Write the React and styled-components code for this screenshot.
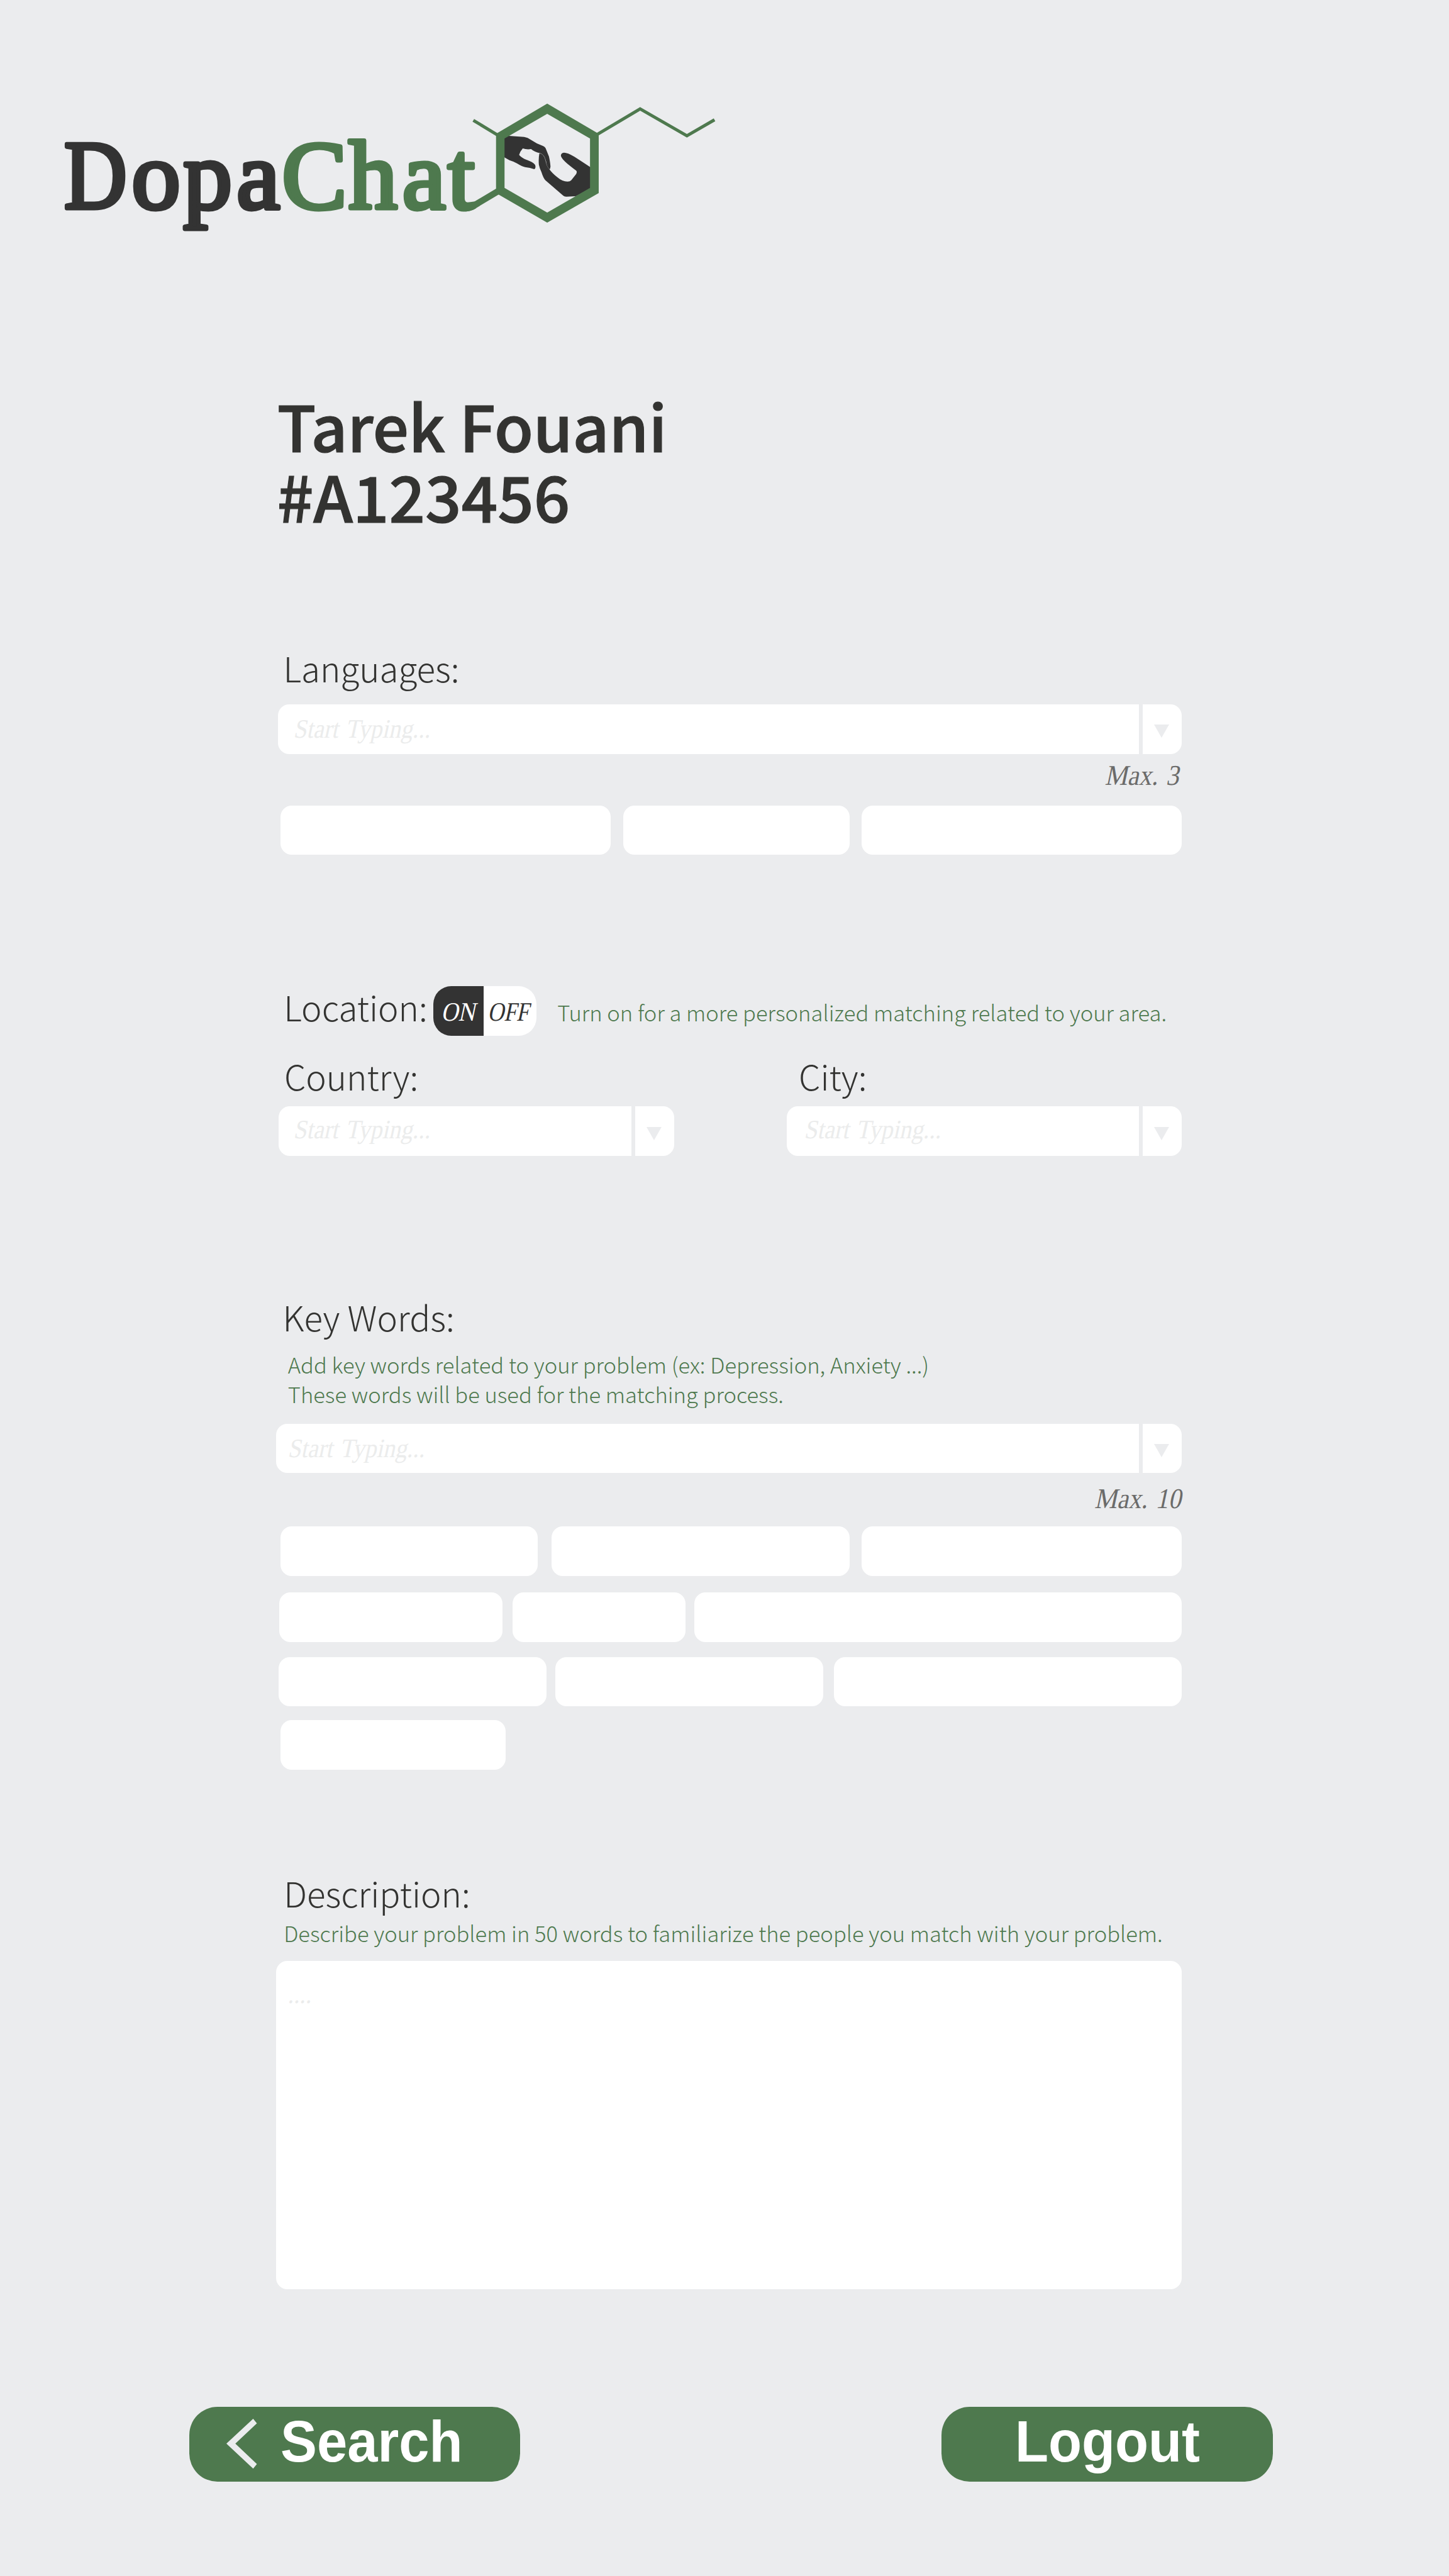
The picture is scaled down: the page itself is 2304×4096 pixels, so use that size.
import React from "react";
import styled, { createGlobalStyle } from "styled-components";

// All lengths are written in artboard units; the page is drawn at this ratio.
const RATIO = 2304 / 2985;
const u = (n) => `${(n * RATIO).toFixed(3)}px`;

const color = {
  page: "#ebecee",
  ink: "#333331",
  dark: "#333333",
  green: "#4e794e",
  note: "#6b6b6a",
  faint: "#ebecec",
  white: "#ffffff",
};

const sans = `"Noto Sans CJK SC", "Noto Sans", sans-serif`;
const serif = `"Liberation Serif", serif`;

const GlobalStyle = createGlobalStyle`
  *, *::before, *::after { box-sizing: border-box; }
  html, body { margin: 0; padding: 0; background: ${color.page}; }
`;

const Page = styled.div`
  display: flex;
  flex-direction: column;
  width: ${u(2985)};
  height: ${u(5306)};
  overflow: hidden;
  background: ${color.page};
  font-family: ${sans};
  color: ${color.ink};
`;

const Header = styled.header`
  display: flex;
  padding: ${u(200)} 0 0 ${u(120)};
`;

const LogoSvg = styled.svg`
  display: block;
  width: ${u(1370)};
  height: ${u(290)};
`;

const LogoText = styled.text`
  font-family: ${serif};
  font-size: 201px;
  fill: ${(p) => p.$color};
  stroke: ${(p) => p.$color};
  stroke-width: 9px;
  stroke-linejoin: round;
`;

const Main = styled.main`
  display: flex;
  flex-direction: column;
  width: ${u(1866)};
  margin-left: ${u(569)};
`;

const Name = styled.h1`
  margin: ${u(311.7)} 0 0;
  padding-left: ${u(2)};
  font-size: ${u(130.8)};
  line-height: ${u(146)};
  font-weight: 500;
  -webkit-text-stroke: ${u(1.6)} ${color.ink};
`;

const Section = styled.section`
  display: flex;
  flex-direction: column;
  margin-top: ${(p) => u(p.$top)};
`;

const Label = styled.label`
  display: block;
  margin-top: ${(p) => u(p.$top || 0)};
  padding-left: ${(p) => u(p.$indent)};
  font-size: ${u(71)};
  line-height: ${u(80)};
  font-weight: 300;
  white-space: nowrap;
`;

const Hint = styled.p`
  margin: ${(p) => u(p.$top || 0)} 0 0;
  padding-left: ${(p) => u(p.$indent || 0)};
  font-size: ${u(44.8)};
  line-height: ${u(60.3)};
  font-weight: 300;
  color: ${color.green};
  white-space: nowrap;
`;

const Slanted = styled.span`
  display: block;
  font-family: ${serif};
  font-size: ${(p) => u(p.$size || 55)};
  line-height: ${u(60)};
  word-spacing: ${u(4)};
  color: ${(p) => p.$color || color.faint};
  white-space: nowrap;
  transform: skewX(-12deg) scaleX(${(p) => p.$stretch || 0.89});
  transform-origin: ${(p) => (p.$end ? "100%" : "0")} 82%;
`;

const Field = styled.div`
  display: flex;
  gap: ${u(8.3)};
  width: ${(p) => u(p.$width)};
  height: ${u(101.9)};
  margin: ${(p) => u(p.$top)} 0 0 ${(p) => u(p.$left || 0)};
`;

const FieldText = styled.div`
  flex: 1;
  padding: ${(p) => u(p.$padTop)} 0 0 ${(p) => u(p.$padLeft)};
  border-radius: ${u(23)} 0 0 ${u(23)};
  background: ${color.white};
`;

const FieldArrow = styled.div`
  display: flex;
  justify-content: center;
  width: ${u(80.4)};
  padding: ${u(42)} ${u(3)} 0 0;
  border-radius: 0 ${u(23)} ${u(23)} 0;
  background: ${color.white};
`;

const ArrowSvg = styled.svg`
  display: block;
  width: ${u(31)};
  height: ${u(27.3)};
`;

const Limit = styled.div`
  display: flex;
  justify-content: flex-end;
  margin-top: ${(p) => u(p.$top)};
  padding-right: ${(p) => u(p.$right)};
`;

const ChipRow = styled.div`
  display: flex;
  margin-top: ${(p) => u(p.$top)};
`;

const Chip = styled.div`
  width: ${(p) => u(p.$width)};
  height: ${u(101.9)};
  margin-left: ${(p) => u(p.$gap)};
  border-radius: ${u(23)};
  background: ${color.white};
`;

const LocationRow = styled.div`
  display: flex;
  height: ${u(102.7)};
`;

const Toggle = styled.div`
  display: flex;
  width: ${u(212.6)};
  height: ${u(102.7)};
  margin-left: ${u(14)};
  border-radius: ${u(37)};
  overflow: hidden;
`;

const ToggleHalf = styled.div`
  flex: 1;
  padding: ${u(23.7)} 0 0 ${(p) => u(p.$pad)};
  background: ${(p) => (p.$active ? color.dark : color.white)};
`;

const LocationLabel = styled(Label)`
  width: ${u(309.5)};
`;

const Columns = styled.div`
  display: flex;
  margin-top: ${u(42.4)};
`;

const Column = styled.div`
  display: flex;
  flex-direction: column;
  width: ${(p) => u(p.$width)};
`;

const TextArea = styled.div`
  height: ${u(676)};
  margin-top: ${u(27.9)};
  padding: ${u(38)} 0 0 ${u(22.5)};
  border-radius: ${u(23)};
  background: ${color.white};
`;

const Footer = styled.footer`
  display: flex;
  justify-content: space-between;
  margin-top: ${u(241.6)};
  padding: 0 ${u(363.3)} 0 ${u(389.5)};
`;

const Button = styled.button`
  display: flex;
  align-items: flex-start;
  width: ${u(681.8)};
  height: ${u(154.4)};
  padding: 0 0 0 ${(p) => u(p.$pad)};
  border: 0;
  border-radius: ${u(58)};
  background: ${color.green};
  color: ${color.white};
`;

const ButtonText = styled.span`
  display: block;
  font-family: "Liberation Sans", Arial, sans-serif;
  font-weight: 700;
  font-size: ${u(119)};
  line-height: ${u(144)};
  transform: scaleX(0.945);
  transform-origin: 0 50%;
`;

const ChevronSvg = styled.svg`
  display: block;
  flex: none;
  width: ${u(62.8)};
  height: ${u(102.7)};
  margin: ${u(25.7)} ${u(48.6)} 0 0;
`;

function Logo() {
  return (
    <LogoSvg viewBox="120 200 1370 290" role="img" aria-label="DopaChat">
      <LogoText $color={color.dark} transform="translate(131.5 429.5) scale(0.89 1)">D</LogoText>
      <LogoText $color={color.dark} x="270.5 377.2 487" y="429.5">opa</LogoText>
      <LogoText $color={color.green} x="580.2 717.7 828.5 922" y="429.5">Chat</LogoText>
      <g fill="none" stroke={color.green}>
        <path d="M974.6 248.3 L1026 279.5" strokeWidth="6.5" />
        <path d="M1229 278 L1318.2 224.7 L1414.6 280.3 L1471.5 247.3" strokeWidth="6.5" />
      </g>
      <path
        fill={color.green}
        d="M953 411 C956 418 960 420.3 966 420.3 Q969 420.3 972 418.5 L1022 389 L1027 401 L978 430.5 Q968 436 958 436 Q950 436 944 431 Z"
      />
      <g transform="translate(940 180) scale(0.357143 0.333333)">
        <path
          fill={color.dark}
          d="M270 310 L301 301 L390 308 Q410 310 430 326 Q465 352 500 364 Q510 368 514 378 L533 428 Q540 460 542 490 Q541 505 536 508 Q525 500 519 475 Q513 420 482 408 Q450 402 430 383 Q405 387 382 379 Q366 398 361 419 Q372 436 405 450 Q440 463 453 480 Q460 500 448 507 Q425 498 395 494 Q380 492 350 472 Q330 460 305 452 L270 430 Z"
        />
        <path
          fill={color.dark}
          d="M478 409 Q472 440 475 480 Q480 505 490 525 Q500 560 513 576 L615 670 Q622 678 635 677 L688 674 L780 625 L780 500 L680 430 Q640 405 620 405 Q602 408 602 424 Q608 445 640 474 Q670 500 690 516 Q697 523 690 537 L662 575 Q655 584 640 584 Q610 584 580 556 Q550 530 536 508 Q520 490 514 455 Q505 412 478 409 Z"
        />
        <path
          fill="none"
          stroke="#8c8c8c"
          strokeWidth="1.6"
          d="M480 408 Q505 412 514 455 Q520 490 536 508"
        />
      </g>
      <path
        fill={color.green}
        fillRule="evenodd"
        d="M1126.8 214 L1232.9 276 L1232.9 398.3 L1126.8 459 L1021.4 398.3 L1021.4 276 Z M1126.8 235 L1038.9 285.7 L1038.9 387.7 L1126.8 438.3 L1215 387.7 L1215 285.7 Z"
      />
    </LogoSvg>
  );
}

function Select({ top, left, width, padTop = 21.6, padLeft }) {
  return (
    <Field $top={top} $left={left} $width={width}>
      <FieldText $padTop={padTop} $padLeft={padLeft}>
        <Slanted>Start Typing...</Slanted>
      </FieldText>
      <FieldArrow>
        <ArrowSvg viewBox="0 0 31 27.3">
          <path d="M0 0 H31 L15.5 27.3 Z" fill={color.page} />
        </ArrowSvg>
      </FieldArrow>
    </Field>
  );
}

// Each chip is [gap before it, width].
function Chips({ top, items }) {
  return (
    <ChipRow $top={top}>
      {items.map(([gap, width], i) => (
        <Chip key={i} $gap={gap} $width={width} />
      ))}
    </ChipRow>
  );
}

export default function App() {
  return (
    <Page>
      <GlobalStyle />
      <Header>
        <Logo />
      </Header>
      <Main>
        <Name>
          Tarek Fouani
          <br />
          #A123456
        </Name>

        <Section $top={242.4}>
          <Label $indent={14.5}>Languages:</Label>
          <Select top={34.9} left={4} width={1862} padTop={21} padLeft={31} />
          <Limit $top={14.7} $right={7.5}>
            <Slanted $size={59} $color={color.note} $stretch={0.89} $end>Max. 3</Slanted>
          </Limit>
          <Chips top={31.8} items={[[9.3, 679.7], [26.3, 465.7], [24.7, 660.3]]} />
        </Section>

        <Section $top={270.3}>
          <LocationRow>
            <LocationLabel $top={2.4} $indent={15.5}>Location:</LocationLabel>
            <Toggle>
              <ToggleHalf $active $pad={16}>
                <Slanted $color={color.white} $stretch={0.88}>ON</Slanted>
              </ToggleHalf>
              <ToggleHalf $pad={8}>
                <Slanted $color={color.dark} $stretch={0.84}>OFF</Slanted>
              </ToggleHalf>
            </Toggle>
            <Hint $top={23.2} $indent={43}>
              Turn on for a more personalized matching related to your area.
            </Hint>
          </LocationRow>
          <Columns>
            <Column $width={1052}>
              <Label $indent={16.5}>Country:</Label>
              <Select top={22.5} left={5.4} width={814.4} padTop={18.6} padLeft={30} />
            </Column>
            <Column $width={814}>
              <Label $indent={24.5}>City:</Label>
              <Select top={22.5} width={814} padTop={18.6} padLeft={35} />
            </Column>
          </Columns>
        </Section>

        <Section $top={291.6}>
          <Label $indent={13.5}>Key Words:</Label>
          <Hint $top={27.9} $indent={24}>
            Add key words related to your problem (ex: Depression, Anxiety ...)
            <br />
            These words will be used for the matching process.
          </Hint>
          <Select top={31.5} width={1866} padTop={22} padLeft={22.5} />
          <Limit $top={23.1} $right={2.5}>
            <Slanted $size={59} $color={color.note} $stretch={0.89} $end>Max. 10</Slanted>
          </Limit>
          <Chips top={26.9} items={[[9.3, 529.3], [28.1, 614.3], [24.7, 660.3]]} />
          <Chips top={34.1} items={[[6.7, 459.8], [20.5, 355.8], [18.5, 1004.7]]} />
          <Chips top={31.1} items={[[5.4, 551.6], [18, 551.8], [22.2, 717]]} />
          <Chips top={28.2} items={[[9.3, 463]]} />
        </Section>

        <Section $top={213.9}>
          <Label $indent={15.5}>Description:</Label>
          <Hint $top={12.7} $indent={15.5}>
            Describe your problem in 50 words to familiarize the people you match with your problem.
          </Hint>
          <TextArea>
            <Slanted>....</Slanted>
          </TextArea>
        </Section>
      </Main>
      <Footer>
        <Button $pad={77.5}>
          <ChevronSvg viewBox="0 0 62.8 102.7">
            <path
              d="M55.1 0 L62.8 9.3 L18.4 51.3 L62.8 93.4 L55.1 102.7 L0 51.3 Z"
              fill={color.page}
            />
          </ChevronSvg>
          <ButtonText>Search</ButtonText>
        </Button>
        <Button $pad={151}>
          <ButtonText>Logout</ButtonText>
        </Button>
      </Footer>
    </Page>
  );
}
